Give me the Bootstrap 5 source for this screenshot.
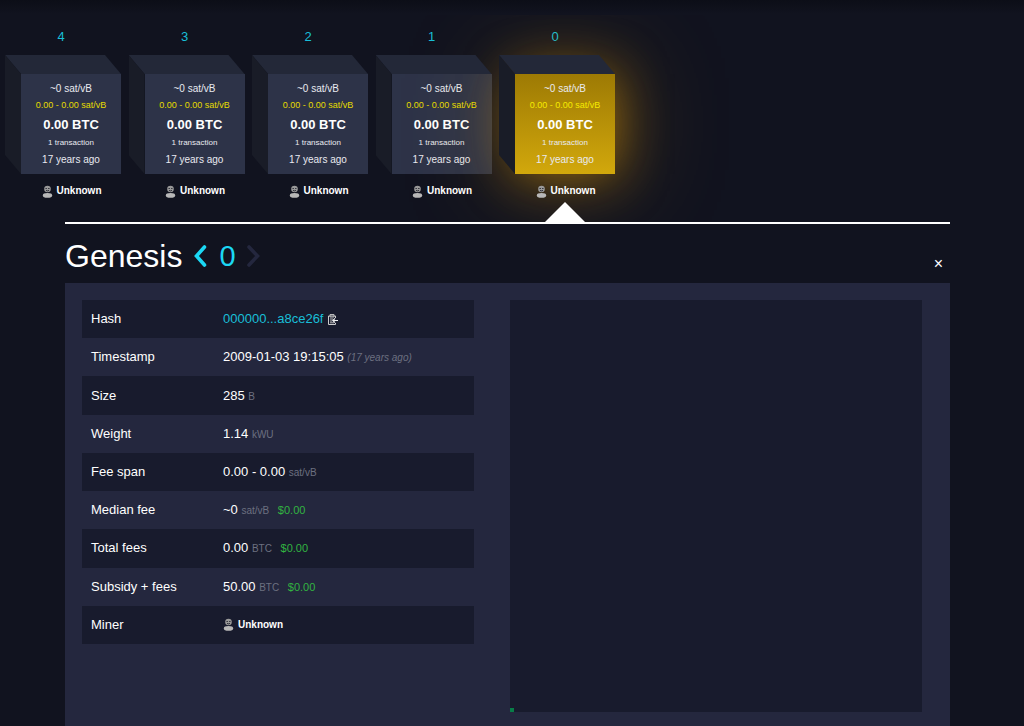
<!DOCTYPE html>
<html lang="en">
<head>
<meta charset="utf-8">
<meta name="viewport" content="width=device-width, initial-scale=1">
<title>Block 0 - Genesis</title>
<link href="https://cdn.jsdelivr.net/npm/bootstrap@5.3.0/dist/css/bootstrap.min.css" rel="stylesheet">
<style>
  :root { --cyan: #1bd8f4; --cyan-soft: #18bfd8; }
  body {
    background: #11131f linear-gradient(#0c0e17, #11131f) top / 100% 14px no-repeat;
    color: #fff;
    font-family: "Liberation Sans", Arial, sans-serif;
    font-size: 13px;
    line-height: 18px;
  }
  a { color: var(--cyan); text-decoration: none; }
  .soft-link { color: var(--cyan-soft); }
  .chain { width: 610px; padding-top: 28px; margin-left: 5px; clip-path: inset(15px -200px -24px -5px); }
  .block-item { width: 116px; }
  .block-height { padding-right: 4px; }
  .cube { display: grid; grid-template: 19px 100px / 16px 100px; margin-top: 9px; }
  .cube-top, .cube-side { grid-area: 1 / 1 / 3 / 3; }
  .cube-top { background: #232838; clip-path: polygon(0 0, 100px 0, 100% 19px, 16px 19px); }
  .cube-side { background: #191c27; clip-path: polygon(0 0, 16px 19px, 16px 100%, 0 100px); }
  .cube-face { grid-area: 2 / 2; background: #2d3348; color: #e9eaf0; font-size: 10px; line-height: 14px; padding-top: 8px; }
  .fee-range { color: #e6dc00; font-size: 9px; line-height: 18px; }
  .amount { color: #fff; font-size: 13px; line-height: 21px; }
  .tx-count { font-size: 8px; line-height: 15px; }
  .age { line-height: 20px; }
  .current .cube-face { background: linear-gradient(#9d7a04, #d2a80c); box-shadow: 0 0 50px rgba(253, 171, 0, .5), 0 0 110px rgba(253, 171, 0, .35); }
  .current .fee-range { color: #f6ea00; }
  .miner { font-size: 10px; line-height: 14px; gap: 4px; }
  .miner svg { width: 11px; height: 13px; }
  .block-item .miner { margin-top: 10px; padding-left: 17px; }
  .details { padding: 0 74px 0 65px; position: relative; }
  .marker { border-bottom: 2px solid #fff; padding-left: 480px; margin-top: 4px; }
  .marker svg { width: 40px; height: 20px; }
  .heading { height: 59px; padding: 4px 0 7px; }
  .heading h1 { font-size: 32px; line-height: 40px; }
  .heading .block-number { font-size: 29px; line-height: 40px; padding: 0 11px; }
  .heading .arrow { width: 14px; height: 24px; }
  .close-btn { font-size: 16px; line-height: 16px; padding: 4px 7px; }
  .panel { background: #24273e; display: grid; grid-template-columns: 392fr 411fr; gap: 36px; padding: 17px 28px 16px 17px; }
  .facts { height: 344px; align-self: start; font-size: 13px; }
  .facts tr { height: 38px; }
  .facts tr:nth-child(odd) { background: #181b2d; }
  .facts th { width: 132px; font-weight: 400; padding: 0 0 0 9px; }
  .facts td { padding: 0 0 0 9px; }
  .unit { color: #6c7080; font-size: 10px; line-height: 1; }
  .fiat { color: #32b341; font-size: 11px; line-height: 1; margin-left: 5px; }
  .copy-btn { line-height: 11px; }
  .copy-btn svg { width: 11px; height: 11px; }
  .overview { background: #181b2d; aspect-ratio: 1; }
  .tx-square { width: 4px; height: 4px; background: #087d48; }
</style>
</head>
<body>
<svg class="d-none" aria-hidden="true">
  <symbol id="person" viewBox="0 0 11 13">
    <circle cx="5.500" cy="4" r="3.300" fill="#999"/>
    <path d="M3.500 3.500h1.400M6.100 3.500h1.400M4 5.400q1.500 1 3 0" stroke="#22242e" stroke-width=".9" fill="none"/>
    <ellipse cx="5.500" cy="10.400" rx="4.700" ry="2.300" fill="#b8b8b8"/>
  </symbol>
</svg>

<nav class="chain d-flex justify-content-between" aria-label="Blocks" id="chain"></nav>

<main class="details">
  <div class="marker d-flex"><svg viewBox="0 0 40 20"><path d="M20 0L40 20H0z" fill="#fff"/></svg></div>
  <header class="heading d-flex align-items-end justify-content-between">
    <div class="d-flex align-items-center">
      <h1 class="m-0 fw-normal">Genesis</h1>
      <a href="#next" class="d-flex ms-2 ps-1" aria-label="Next block"><svg class="arrow" viewBox="0 0 14 24"><path d="M10.500 3L2.500 12l8 9" fill="none" stroke="currentColor" stroke-width="3.600" stroke-linecap="round"/></svg></a>
      <a href="#block" class="block-number">0</a>
      <svg class="arrow" viewBox="0 0 14 24"><path d="M2 3L10.500 12 2 21" fill="none" stroke="#24273e" stroke-width="3.600" stroke-linecap="round"/></svg>
    </div>
    <button type="button" class="close-btn btn border-0 text-white" aria-label="Close">×</button>
  </header>
  <section class="panel">
    <table class="facts w-100">
      <tbody>
        <tr><th scope="row">Hash</th><td><div class="d-flex align-items-center gap-1"><a class="soft-link" href="#hash">000000...a8ce26f</a><button type="button" class="copy-btn btn p-0 border-0" aria-label="Copy hash"><svg class="d-block" viewBox="0 0 11 11"><path d="M8.500 4V2h-7v8.500h7V9" fill="none" stroke="#ccc"/><path d="M3 .5h4v2.500H3zM3 5h3M3 7h2M3 8.800h4" fill="none" stroke="#bbb"/><path d="M11 6.500H6M8 4.300L5.800 6.500 8 8.700" fill="none" stroke="#eee" stroke-width="1.200"/></svg></button></div></td></tr>
        <tr><th scope="row">Timestamp</th><td>2009-01-03 19:15:05 <i class="unit">(17 years ago)</i></td></tr>
        <tr><th scope="row">Size</th><td>285 <span class="unit">B</span></td></tr>
        <tr><th scope="row">Weight</th><td>1.14 <span class="unit">kWU</span></td></tr>
        <tr><th scope="row">Fee span</th><td>0.00 - 0.00 <span class="unit">sat/vB</span></td></tr>
        <tr><th scope="row">Median fee</th><td>~0 <span class="unit">sat/vB</span> <span class="fiat">$0.00</span></td></tr>
        <tr><th scope="row">Total fees</th><td>0.00 <span class="unit">BTC</span> <span class="fiat">$0.00</span></td></tr>
        <tr><th scope="row">Subsidy + fees</th><td>50.00 <span class="unit">BTC</span> <span class="fiat">$0.00</span></td></tr>
        <tr><th scope="row">Miner</th><td><span class="miner fw-bold d-flex align-items-center"><svg><use href="#person"/></svg>Unknown</span></td></tr>
      </tbody>
    </table>
    <div class="overview d-flex align-items-end"><div class="tx-square"></div></div>
  </section>
</main>

<script>
  document.getElementById('chain').innerHTML = [4, 3, 2, 1, 0].map(height => `
    <div class="block-item text-center ${height === 0 ? 'current' : ''}">
      <a class="block-height soft-link d-block" href="#block-${height}">${height}</a>
      <div class="cube">
        <div class="cube-face">
          <div>~0 sat/vB</div>
          <div class="fee-range">0.00 - 0.00 sat/vB</div>
          <div class="amount fw-bold">0.00 BTC</div>
          <div class="tx-count">1 transaction</div>
          <div class="age">17 years ago</div>
        </div>
        <div class="cube-top"></div>
        <div class="cube-side"></div>
      </div>
      <div class="miner fw-bold d-flex align-items-center justify-content-center"><svg><use href="#person"/></svg>Unknown</div>
    </div>`).join('');
</script>
<script src="https://cdn.jsdelivr.net/npm/bootstrap@5.3.0/dist/js/bootstrap.bundle.min.js"></script>
</body>
</html>
